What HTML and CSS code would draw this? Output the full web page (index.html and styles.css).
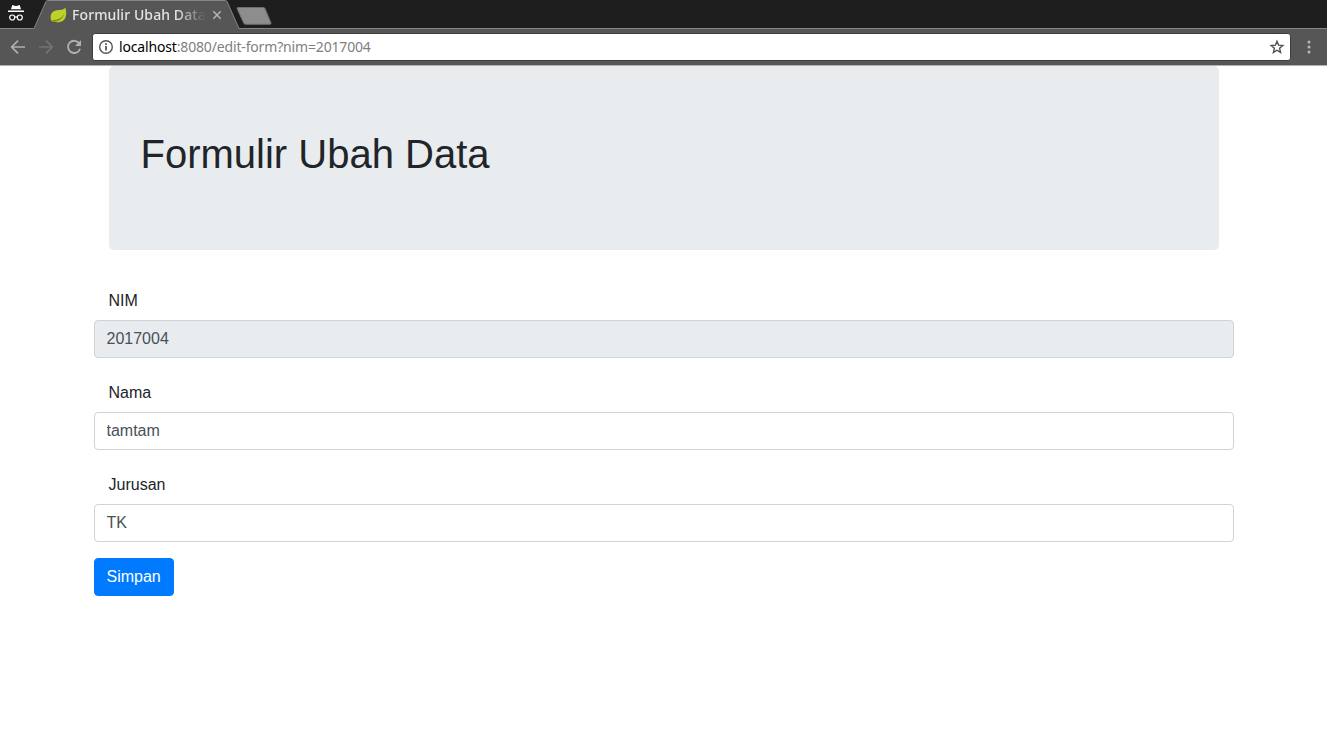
FILE: index.html
```html
<!DOCTYPE html>
<html lang="id">
<head>
<meta charset="utf-8">
<title>Formulir Ubah Data</title>
<link rel="stylesheet" href="styles.css">
</head>
<body>
<header class="browser">
  <div class="tab-strip">
    <svg class="incognito" width="18" height="18" viewBox="0 0 18 18">
      <path d="M5.200 1.200q.4-.3.9 0 1.400.7 2.900.7t2.900-.7q.5-.3.900 0l1.200 4H4zM1 6.600h16v1.300H1z" fill="#fff"/>
      <g fill="none" stroke="#fff" stroke-width="1.200"><circle cx="5.200" cy="13.500" r="2.500"/><circle cx="12.800" cy="13.500" r="2.500"/><path d="M7.700 13.200q1.300-.7 2.600 0"/></g>
    </svg>
    <div class="tab">
      <svg class="tab-shape" width="208" height="29" viewBox="0 0 208 29">
        <path d="M0 29v-.5h1L13 1.500Q13.400.5 14.500.5h178q1.100 0 1.500 1l12 27h2v.5z" fill="#565656"/>
        <path d="M0 28.500h1L13 1.500Q13.400.5 14.500.5h178q1.100 0 1.500 1l12 27h2" fill="none" stroke="#858585"/>
      </svg>
      <svg class="leaf" width="17" height="16" viewBox="0 0 17 16">
        <path d="M15.300.4c1.600 5 1.200 10.200-1.800 12.800-3 2.600-7.500 2.300-11.300 1.300C.3 12.900.2 9.300 1.200 7c1.800-4.200 6.600-3.700 10.200-4.300 2-.3 3.300-1 3.900-2.300z" fill="#bfd02c"/>
        <path d="M2 13.300c5.500-.2 10-2 12.500-7-1.200 5.200-5.500 8.700-11.500 8.600z" fill="#84960f"/>
      </svg>
      <span class="tab-title">Formulir Ubah Data</span>
      <svg class="close" width="10" height="10" viewBox="0 0 10 10"><path d="M1.300 1.300l7.400 7.400M8.700 1.300L1.300 8.700" stroke="#b5b5b5" stroke-width="1.500"/></svg>
    </div>
    <svg class="new-tab" width="36" height="18" viewBox="0 0 36 18"><path d="M2 .5h25.500q1 0 1.500 1l6 14.500q.4 1.300-1 1.300H9.500q-1.200 0-1.700-1L1.200 2Q.7.5 2 .5z" fill="#8d8d8d" stroke="#6d6d6d"/></svg>
  </div>
  <div class="toolbar">
    <svg class="nav" width="16" height="16" viewBox="0 0 16 16"><path d="M15 8H2.500M8 1.700L1.700 8 8 14.300" fill="none" stroke="#b0b0b0" stroke-width="1.700"/></svg>
    <svg class="nav" width="16" height="16" viewBox="0 0 16 16"><path d="M1 8h12.500M8 1.700L14.300 8 8 14.300" fill="none" stroke="#747474" stroke-width="1.700"/></svg>
    <svg class="nav" width="16" height="16" viewBox="0 0 16 16"><path d="M13.200 4.400A6.100 6.100 0 1 0 14 9.700" fill="none" stroke="#b0b0b0" stroke-width="1.800"/><path d="M15 1v6H9z" fill="#b0b0b0"/></svg>
    <div class="address">
      <svg class="info" width="16" height="16" viewBox="0 0 16 16"><circle cx="8" cy="8" r="6.300" fill="none" stroke="#555" stroke-width="1.400"/><path d="M7.200 7.100h1.600v4.400H7.200zM7.200 4.300h1.600v1.600H7.200z" fill="#444"/></svg>
      <span class="url"><b>localhost</b>:8080/edit-form?nim=2017004</span>
      <svg class="star" width="16" height="16" viewBox="0 0 16 16"><path d="M8 2.300l1.600 3.900 4.200.3-3.200 2.800 1 4.100L8 11.200l-3.600 2.200 1-4.100-3.200-2.800 4.200-.3z" fill="none" stroke="#505050" stroke-width="1.400"/></svg>
    </div>
    <svg class="menu" width="4" height="14" viewBox="0 0 4 14"><g fill="#b8b8b8"><circle cx="2" cy="2" r="1.500"/><circle cx="2" cy="7" r="1.500"/><circle cx="2" cy="12" r="1.500"/></g></svg>
  </div>
</header>
<main class="container">
  <section class="jumbotron"><h1>Formulir Ubah Data</h1></section>
  <form>
    <div class="form-group"><label for="nim">NIM</label><input id="nim" class="form-control" value="2017004" readonly></div>
    <div class="form-group"><label for="nama">Nama</label><input id="nama" class="form-control" value="tamtam"></div>
    <div class="form-group"><label for="jurusan">Jurusan</label><input id="jurusan" class="form-control" value="TK"></div>
    <button type="button" class="button">Simpan</button>
  </form>
</main>
</body>
</html>
```
FILE: styles.css
```css
* { box-sizing: border-box; }
body { margin: 0; background: #fff; color: #212529; font: 16px/24px "Liberation Sans", Arial, sans-serif; overflow: hidden; }
svg { display: block; flex: none; }
.browser { height: 66px; font-family: "Noto Sans", sans-serif; }
.tab-strip { height: 28px; display: flex; background: #1e1e1e; }
.incognito { margin: 4px 0 0 7px; }
.tab { position: relative; z-index: 1; width: 208px; height: 29px; margin-left: 8px; padding: 1px 19px 0 17px; display: flex; align-items: center; }
.tab-shape { position: absolute; left: 0; top: 0; }
.leaf, .tab-title, .close { position: relative; }
.tab-title { width: 134px; margin-left: 5px; overflow: hidden; white-space: nowrap; font-size: 14px; font-weight: 500; line-height: 24px; letter-spacing: 0.1px; color: #e4e4e4; -webkit-mask-image: linear-gradient(90deg, #000 104px, transparent 134px); mask-image: linear-gradient(90deg, #000 104px, transparent 134px); }
.close { margin-left: 6px; }
.new-tab { margin: 7px 0 0 -5px; }
.toolbar { height: 38px; display: flex; align-items: center; background: #565656; border-top: 1px solid #858585; border-bottom: 1px solid #b0b0b0; padding: 0 16px 0 10px; }
.nav { margin-right: 12px; }
.nav + .nav + .nav { margin-right: 10px; }
.address { flex: 1; height: 28px; display: flex; align-items: center; background: #fff; border: 1px solid #3d3d3d; border-radius: 3px; padding: 0 5px; }
.url { margin-left: 5px; flex: 1; font-size: 14px; line-height: 26px; letter-spacing: -0.16px; color: #808080; white-space: nowrap; }
.url b { font-weight: 400; color: #000; }
.menu { margin-left: 16px; }
.container { width: 1140px; margin: 0 auto; }
.jumbotron { margin: 0 15px 32px; padding: 64px 32px; background: #e9ecef; border-radius: 5px; }
h1 { margin: 0 0 8px; font-size: 40px; font-weight: 400; line-height: 48px; }
.form-group { margin-bottom: 16px; }
label { display: block; padding: 7px 15px; }
.form-control { display: block; width: 100%; height: 38px; padding: 6px 12px; border: 1px solid #ced4da; border-radius: 4px; background: #fff; color: #495057; font: inherit; }
.form-control:read-only { background: #e9ecef; }
.button { display: block; height: 38px; padding: 6px 12px; border: 1px solid #007bff; border-radius: 4px; background: #007bff; color: #fff; font: inherit; }
```
